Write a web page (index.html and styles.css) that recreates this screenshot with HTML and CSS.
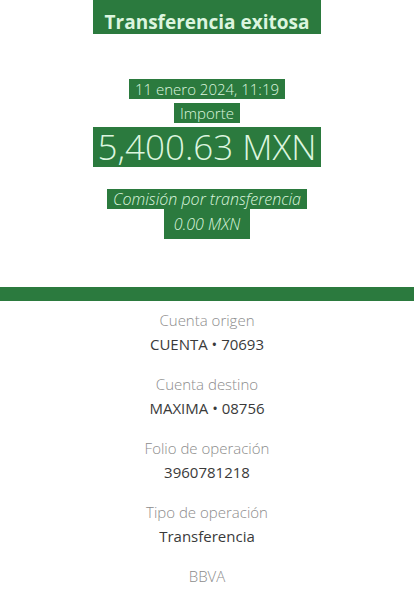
FILE: index.html
```html
<!DOCTYPE html>
<html lang="es">
<head>
    <meta charset="UTF-8">
    <meta name="viewport" content="width=device-width, initial-scale=1.0">
    <title>Comprobante</title>
    <link rel="stylesheet" href="styles.css">
</head>
<body>
    <!-- Resumen -->
    <section class="summary">
        <h1 class="hl title">Transferencia exitosa</h1>
        <p class="hl date">11 enero 2024, 11:19</p>
        <p class="hl label">Importe</p>
        <p class="hl amount">5,400.63 MXN</p>
        <p class="hl fee">Comisión por transferencia</p>
        <p class="hl fee-value">0.00 MXN</p>
    </section>

    <div class="bar"></div>

    <!-- Detalle -->
    <section class="details">
        <div class="item">
            <span class="key">Cuenta origen</span>
            <span class="val">CUENTA • 70693</span>
        </div>
        <div class="item">
            <span class="key">Cuenta destino</span>
            <span class="val">MAXIMA • 08756</span>
        </div>
        <div class="item">
            <span class="key">Folio de operación</span>
            <span class="val">3960781218</span>
        </div>
        <div class="item">
            <span class="key">Tipo de operación</span>
            <span class="val">Transferencia</span>
        </div>
        <div class="item">
            <span class="key">BBVA</span>
        </div>
    </section>
</body>
</html>
```

FILE: styles.css
```css
body {
    margin: 0;
    background: #ffffff;
    font-family: 'Open Sans', sans-serif;
    text-align: center;
}

.summary {
    display: flex;
    flex-direction: column;
    align-items: center;
    height: 287px;
}

.hl {
    margin: 0;
    background: #2b7a3e;
    color: #dcf5df;
    padding: 0 6px;
    font-weight: 300;
}

.title {
    font-size: 19px;
    font-weight: 700;
    line-height: 22px;
    padding: 11px 12px 1px;
}

.date {
    margin-top: 45px;
    font-size: 15px;
    line-height: 20px;
}

.label {
    margin-top: 4px;
    font-size: 15px;
    line-height: 20px;
}

.amount {
    margin-top: 4px;
    font-size: 35px;
    line-height: 40px;
    padding: 0 4px;
}

.fee {
    margin-top: 22px;
    font-size: 16px;
    font-style: italic;
    line-height: 20px;
}

.fee-value {
    font-size: 16px;
    font-style: italic;
    line-height: 20px;
    padding: 5px 10px 5px;
}

.bar {
    height: 14px;
    background: #2b7a3e;
}

.details {
    display: flex;
    flex-direction: column;
    gap: 20px;
    padding-top: 9px;
}

.item {
    display: flex;
    flex-direction: column;
    gap: 4px;
    font-size: 15px;
    line-height: 20px;
}

.key {
    color: #8c8c8c;
    font-weight: 300;
}

.val {
    color: #3a3a3a;
}
```
